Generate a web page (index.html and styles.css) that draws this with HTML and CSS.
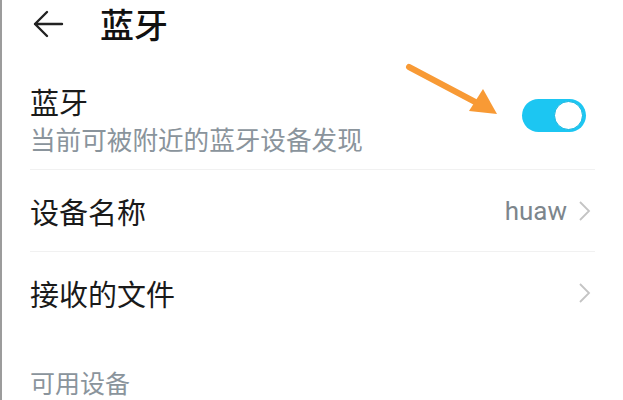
FILE: index.html
```html
<!DOCTYPE html>
<html lang="zh-CN">
<head>
  <meta charset="UTF-8">
  <meta name="viewport" content="width=device-width, initial-scale=1.0">
  <title>蓝牙</title>
  <link rel="stylesheet" href="styles.css">
</head>
<body>
  <div class="screen">
    <div class="header">
      <svg class="back" width="32" height="28" viewBox="0 0 32 28">
        <path d="M30 14H3M15 2L3 14l12 12" fill="none" stroke="#222" stroke-width="2.4" stroke-linecap="round" stroke-linejoin="round"/>
      </svg>
      <h1>蓝牙</h1>
    </div>

    <div class="row row-main">
      <div class="texts">
        <div class="title">蓝牙</div>
        <div class="sub">当前可被附近的蓝牙设备发现</div>
      </div>
      <div class="toggle"><span class="knob"></span></div>
    </div>

    <div class="row">
      <div class="title">设备名称</div>
      <div class="end">
        <span class="value">huaw</span>
        <svg class="chev" width="13" height="20" viewBox="0 0 13 20"><path d="M2 1l9 9-9 9" fill="none" stroke="#c4c4c4" stroke-width="1.8"/></svg>
      </div>
    </div>

    <div class="row last">
      <div class="title">接收的文件</div>
      <div class="end">
        <svg class="chev" width="13" height="20" viewBox="0 0 13 20"><path d="M2 1l9 9-9 9" fill="none" stroke="#c4c4c4" stroke-width="1.8"/></svg>
      </div>
    </div>

    <div class="section">可用设备</div>

    <svg class="pointer" width="110" height="70" viewBox="0 0 110 70">
      <path d="M12 12L82 49" stroke="#f89a35" stroke-width="6" stroke-linecap="round"/>
      <path d="M100 59L72 56L86 34Z" fill="#f89a35"/>
    </svg>
  </div>
</body>
</html>
```

FILE: styles.css
```css
* { box-sizing: border-box; }
body { margin: 0; background: #fff; font-family: "Noto Sans CJK SC", "Noto Sans", sans-serif; }
.screen { position: relative; width: 623px; height: 400px; overflow: hidden; border-left: 2px solid #9c9c9c; padding: 0 28px 0 28px; }

.header { height: 44px; padding-top: 3px; display: flex; align-items: center; }
.back { margin-left: 2px; }
.header h1 { margin: 0 0 0 36px; font-size: 34px; font-weight: 500; line-height: 38px; color: #111; }

.row { display: flex; align-items: center; justify-content: space-between; height: 82px; border-bottom: 1px solid #f1f1f1; }
.row.last { border-bottom: none; }
.row-main { height: 126px; align-items: flex-start; padding-top: 40px; }
.title { font-size: 29px; line-height: 34px; color: #1a1a1a; }
.sub { margin-top: 4px; font-size: 25.6px; line-height: 34px; color: #8a949c; }

.toggle { margin-top: 15px; margin-right: 9px; width: 64px; height: 33px; border-radius: 17px; background: #1cc6f2; position: relative; }
.knob { position: absolute; right: 3px; top: 2px; width: 29px; height: 29px; border-radius: 50%; background: #fff; border: 1px solid #12b5e0; }

.end { display: flex; align-items: center; gap: 11px; margin-right: 4px; }
.value { font-family: Roboto, "Noto Sans", sans-serif; font-size: 26px; color: #7d868c; }

.section { padding-top: 33px; font-size: 25px; line-height: 30px; color: #8a949c; }

.pointer { position: absolute; left: 395px; top: 55px; }
```
